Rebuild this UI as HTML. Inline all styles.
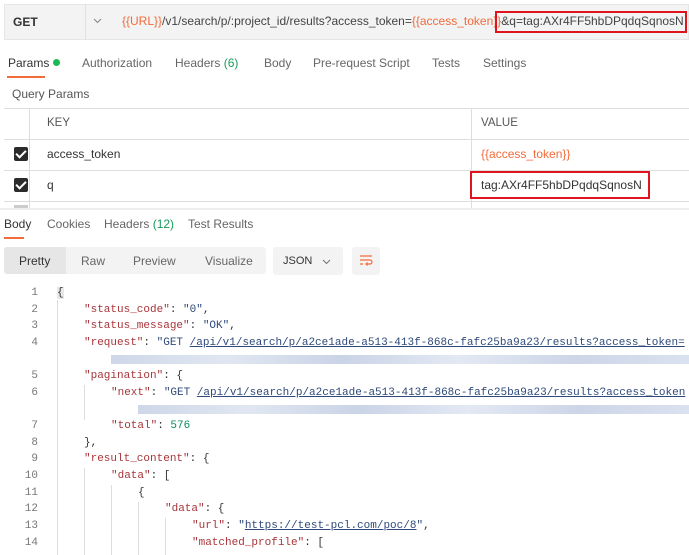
<!DOCTYPE html>
<html><head><style>
*{margin:0;padding:0;box-sizing:border-box}
body{width:689px;height:555px;overflow:hidden;background:#fff;font-family:"Liberation Sans",sans-serif;font-size:12px;color:#333;position:relative}
.a{position:absolute;white-space:nowrap}
.or{color:#f26b3a}
.k{color:#a8353a}
.s{color:#2f4a7a}
.n{color:#0b8a5b}
.u{text-decoration:underline;color:#2f4a7a}
.code{font-family:"Liberation Mono",monospace;font-size:11px}
.ln{position:absolute;width:30px;text-align:right;left:8px;color:#777;font-family:"Liberation Mono",monospace;font-size:11px}
.blur{position:absolute;height:9px;background:linear-gradient(90deg,#c9d3e6,#dde4f0 20%,#c4cfe4 40%,#e0e6f2 60%,#c7d1e5 80%,#d6deee);opacity:.9}
.cb{position:absolute;width:14px;height:14px;background:#2b2b2b;border-radius:2px}
.cb:after{content:"";position:absolute;left:4px;top:1px;width:4px;height:8px;border:solid #fff;border-width:0 2px 2px 0;transform:rotate(45deg)}
.vl{position:absolute;width:1px;background:#ddd}
</style></head><body>
<div class="a" style="left:4px;top:4px;width:685px;height:36px;background:#f3f3f3;border:1px solid #e6e6e6"></div>
<div class="a" style="left:85px;top:4px;width:1px;height:36px;background:#e0e0e0"></div>
<div class="a" style="left:13px;top:15px;font-weight:bold;font-size:12px;color:#333">GET</div>
<svg class="a" style="left:93px;top:18px" width="9" height="6" viewBox="0 0 9 6" fill="none" stroke="#888" stroke-width="1.1"><path d="M1 1l3.5 3.5L8 1"/></svg>
<div class="a" style="left:122px;top:14px;font-size:12px;color:#444"><span class="or">{{URL}}</span>/v1/search/p/:project_id/results?access_token=<span class="or">{{access_token}}</span>&amp;q=tag:AXr4FF5hbDPqdqSqnosN</div>
<div class="a" style="left:495px;top:11px;width:192px;height:22px;border:2px solid #e0141e"></div>

<div class="a" style="left:8px;top:56px;color:#333">Params <span style="display:inline-block;width:7px;height:7px;border-radius:50%;background:#1db954;vertical-align:1px"></span></div>
<div class="a" style="left:7px;top:76px;width:38px;height:2px;background:#f26b3a"></div>
<div class="a" style="left:82px;top:56px;color:#666">Authorization</div>
<div class="a" style="left:175px;top:56px;color:#666">Headers <span style="color:#1a9a5a">(6)</span></div>
<div class="a" style="left:264px;top:56px;color:#666">Body</div>
<div class="a" style="left:313px;top:56px;color:#666">Pre-request Script</div>
<div class="a" style="left:432px;top:56px;color:#666">Tests</div>
<div class="a" style="left:483px;top:56px;color:#666">Settings</div>
<div class="a" style="left:12px;top:87px;color:#555">Query Params</div>

<div class="a" style="left:4px;top:108px;width:685px;height:1px;background:#ddd"></div>
<div class="a" style="left:4px;top:139px;width:685px;height:1px;background:#ddd"></div>
<div class="a" style="left:4px;top:170px;width:685px;height:1px;background:#ddd"></div>
<div class="a" style="left:4px;top:201px;width:685px;height:1px;background:#ddd"></div>
<div class="vl" style="left:29px;top:108px;height:100px"></div>
<div class="vl" style="left:471px;top:108px;height:100px"></div>
<div class="a" style="left:47px;top:117px;color:#555;font-size:11.5px">KEY</div>
<div class="a" style="left:481px;top:117px;color:#555;font-size:11.5px">VALUE</div>
<div class="cb" style="left:14px;top:147px"></div>
<div class="a" style="left:47px;top:147px">access_token</div>
<div class="a or" style="left:481px;top:147px">{{access_token}}</div>
<div class="cb" style="left:14px;top:178px"></div>
<div class="a" style="left:47px;top:178px">q</div>
<div class="a" style="left:481px;top:178px">tag:AXr4FF5hbDPqdqSqnosN</div>
<div class="a" style="left:470px;top:171px;width:180px;height:28px;border:2px solid #e0141e"></div>
<div class="a" style="left:14px;top:205px;width:14px;height:4px;background:#ccc"></div>
<div class="a" style="left:0;top:208px;width:689px;height:2px;background:#eee"></div>

<div class="a" style="left:4px;top:217px;color:#333">Body</div>
<div class="a" style="left:4px;top:237px;width:20px;height:2px;background:#f26b3a"></div>
<div class="a" style="left:47px;top:217px;color:#666">Cookies</div>
<div class="a" style="left:104px;top:217px;color:#666">Headers <span style="color:#1a9a5a">(12)</span></div>
<div class="a" style="left:188px;top:217px;color:#666">Test Results</div>

<div class="a" style="left:4px;top:247px;width:262px;height:27px;background:#f3f3f3;border-radius:3px"></div>
<div class="a" style="left:4px;top:247px;width:62px;height:27px;background:#e6e6e6;border-radius:3px 0 0 3px"></div>
<div class="a" style="left:19px;top:254px;color:#333">Pretty</div>
<div class="a" style="left:81px;top:254px;color:#666">Raw</div>
<div class="a" style="left:133px;top:254px;color:#666">Preview</div>
<div class="a" style="left:205px;top:254px;color:#666">Visualize</div>
<div class="a" style="left:273px;top:247px;width:70px;height:28px;background:#f3f3f3;border-radius:3px"></div>
<div class="a" style="left:283px;top:255px;color:#333;font-size:11px">JSON</div>
<svg class="a" style="left:322px;top:259px" width="9" height="6" viewBox="0 0 9 6" fill="none" stroke="#777" stroke-width="1.1"><path d="M1 1l3.5 3.5L8 1"/></svg>
<div class="a" style="left:352px;top:247px;width:28px;height:28px;background:#f3f3f3;border-radius:3px"></div>
<svg class="a" style="left:359px;top:254px" width="14" height="14" viewBox="0 0 14 14" fill="none" stroke="#f26b3a" stroke-width="1.2"><path d="M1 2h12M1 6h10a2 2 0 0 1 0 4H7M8.5 8.5L7 10l1.5 1.5M1 10h3"/></svg>

<div class="vl" style="left:57px;top:300px;height:255px;background:#ddd"></div>
<div class="vl" style="left:84px;top:385px;height:35px"></div>
<div class="vl" style="left:84px;top:468px;height:87px"></div>
<div class="vl" style="left:111px;top:485px;height:70px"></div>
<div class="vl" style="left:138px;top:502px;height:53px"></div>
<div class="vl" style="left:165px;top:518px;height:37px"></div>

<div class="ln" style="top:287px">1</div>
<div class="ln" style="top:304px">2</div>
<div class="ln" style="top:320px">3</div>
<div class="ln" style="top:337px">4</div>
<div class="ln" style="top:370px">5</div>
<div class="ln" style="top:387px">6</div>
<div class="ln" style="top:420px">7</div>
<div class="ln" style="top:437px">8</div>
<div class="ln" style="top:453px">9</div>
<div class="ln" style="top:470px">10</div>
<div class="ln" style="top:487px">11</div>
<div class="ln" style="top:503px">12</div>
<div class="ln" style="top:520px">13</div>
<div class="ln" style="top:537px">14</div>

<div class="a code" style="left:57px;top:287px;background:#e8e8e8">{</div>
<div class="a code" style="left:84px;top:304px"><span class="k">"status_code"</span>: <span class="s">"0"</span>,</div>
<div class="a code" style="left:84px;top:320px"><span class="k">"status_message"</span>: <span class="s">"OK"</span>,</div>
<div class="a code" style="left:84px;top:337px"><span class="k">"request"</span>: <span class="s">"GET <span class="u">/api/v1/search/p/a2ce1ade-a513-413f-868c-fafc25ba9a23/results?access_token=</span></span></div>
<div class="blur" style="left:111px;top:355px;width:578px"></div>
<div class="a code" style="left:84px;top:370px"><span class="k">"pagination"</span>: {</div>
<div class="a code" style="left:111px;top:387px"><span class="k">"next"</span>: <span class="s">"GET <span class="u">/api/v1/search/p/a2ce1ade-a513-413f-868c-fafc25ba9a23/results?access_token</span></span></div>
<div class="blur" style="left:138px;top:405px;width:551px"></div>
<div class="a code" style="left:111px;top:420px"><span class="k">"total"</span>: <span class="n">576</span></div>
<div class="a code" style="left:84px;top:437px">},</div>
<div class="a code" style="left:84px;top:453px"><span class="k">"result_content"</span>: {</div>
<div class="a code" style="left:111px;top:470px"><span class="k">"data"</span>: [</div>
<div class="a code" style="left:138px;top:487px">{</div>
<div class="a code" style="left:165px;top:503px"><span class="k">"data"</span>: {</div>
<div class="a code" style="left:192px;top:520px"><span class="k">"url"</span>: <span class="s">"<span class="u">https://test-pcl.com/poc/8</span>"</span>,</div>
<div class="a code" style="left:192px;top:537px"><span class="k">"matched_profile"</span>: [</div>
</body></html>
